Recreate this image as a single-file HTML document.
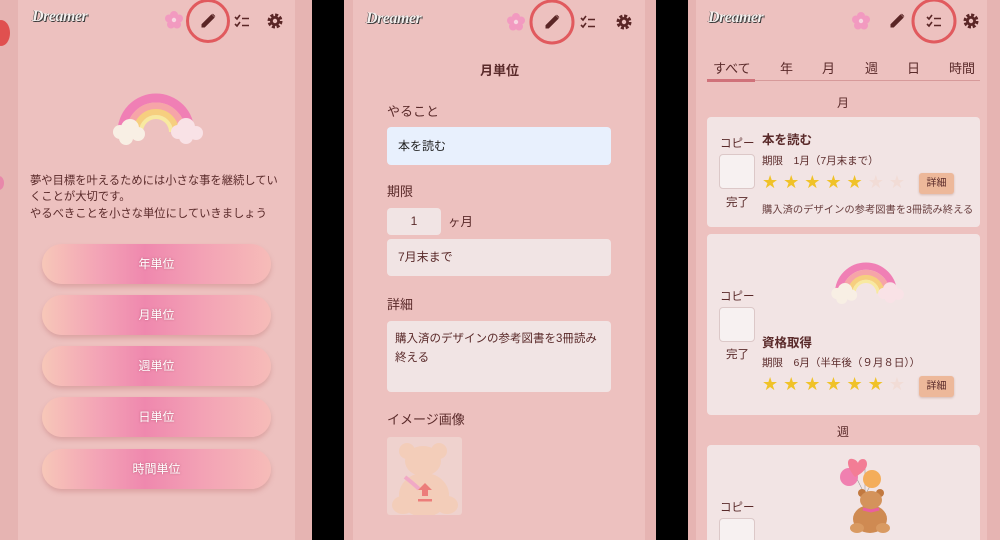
<!DOCTYPE html>
<html style="width:1000px;height:540px;overflow:hidden"><head><meta charset="utf-8">
<style>
*{margin:0;padding:0;box-sizing:border-box}
body{width:1000px;height:540px;overflow:hidden;background:#000;position:relative;font-family:"Liberation Sans","Noto Sans CJK JP",sans-serif;color:#5a2a2a}
.a{position:absolute}
.outer{background:#e6b4b2}
.inner{background:#edc1bf}
.logo{font-family:"Liberation Serif",serif;font-style:italic;font-weight:bold;font-size:16px;color:#f4f0ee;text-shadow:1px 1px 0 #3b3b3b,-0.5px 0 0 #3b3b3b;letter-spacing:-0.5px}
.t12{font-size:11.3px;line-height:16px;white-space:nowrap}
.btn{position:absolute;left:42px;width:229px;height:40px;border-radius:20px;background:linear-gradient(90deg,#f7c7b8 0%,#f3a3b6 25%,#ef88ae 45%,#f3a2b5 70%,#f6bcb8 100%);box-shadow:0 3px 5px rgba(190,110,110,.35);color:#fff;font-size:12px;text-align:center;line-height:40px;text-shadow:0 0 2px rgba(150,60,80,.6)}
.inp{position:absolute;background:#f1e4e4;border-radius:4px;font-size:12px;padding-left:11px}
.card{position:absolute;left:707px;width:273px;background:#f2e4e4;border-radius:4px}
.chk{position:absolute;width:36px;height:35px;border:1px solid #dcc8c8;border-radius:4px;background:#f7f1f1}
.det{position:absolute;width:35px;height:21px;background:#edb89a;border-radius:3px;font-size:10px;text-align:center;line-height:21px;box-shadow:0 1px 2px rgba(150,90,70,.3)}
.stars{position:absolute;font-family:"DejaVu Sans",sans-serif;font-size:18px;letter-spacing:5px;color:#f0c228;white-space:nowrap;line-height:20px}
.stars span{color:#f2dcd6}
</style></head><body>

<div class="a outer" style="left:0;top:0;width:312px;height:540px"></div>
<div class="a inner" style="left:18px;top:0;width:277px;height:540px"></div>
<div class="a" style="left:-8px;top:20px;width:18px;height:26px;border-radius:50%;background:#e0504f"></div>
<div class="a" style="left:-6px;top:176px;width:10px;height:14px;border-radius:50%;background:#e888aa"></div>

<div class="a outer" style="left:344px;top:0;width:312px;height:540px"></div>
<div class="a inner" style="left:353px;top:0;width:292px;height:540px"></div>

<div class="a outer" style="left:688px;top:0;width:312px;height:540px"></div>
<div class="a inner" style="left:696px;top:0;width:291px;height:540px"></div>

<svg width="0" height="0" style="position:absolute">
<defs>
<g id="flower"><g fill="#f29ac0"><circle cx="0" cy="-5" r="4"/><circle cx="5" cy="-1.5" r="4"/><circle cx="3" cy="4.5" r="4"/><circle cx="-3" cy="4.5" r="4"/><circle cx="-5" cy="-1.5" r="4"/></g><circle r="2.2" fill="#f7d6e0"/></g>
<g id="pencil"><path d="M-6 6 L-6 3.5 L3.5 -6 L6 -3.5 L-3.5 6 Z M4.5 -7 L7 -4.5" fill="#5a2626" stroke="#5a2626" stroke-width="1"/></g>
<g id="list" fill="none" stroke="#5a2626" stroke-width="1.6"><path d="M-7 -4 l2 2 l3 -4 M-7 3 l2 2 l3 -4"/><path d="M0 -2.5 h7 M0 4.5 h7"/></g>
<g id="gear"><circle r="6" fill="none" stroke="#5a2626" stroke-width="3" stroke-dasharray="3 1.7"/><circle r="5" fill="#5a2626"/><circle r="2.2" fill="#edc1bf"/></g>
</defs></svg>

<div class="a logo" style="left:32px;top:8px">Dreamer</div>
<svg class="a" style="left:150px;top:0" width="145" height="45">
<use href="#flower" x="24" y="20"/><use href="#pencil" x="58" y="21"/><use href="#list" x="92" y="21"/><use href="#gear" x="125" y="21"/>
<circle cx="58" cy="21" r="20.5" fill="none" stroke="#e15a5e" stroke-width="3"/></svg>

<div class="a logo" style="left:366px;top:10px">Dreamer</div>
<svg class="a" style="left:492px;top:0" width="145" height="45">
<use href="#flower" x="24" y="22"/><use href="#pencil" x="60" y="22"/><use href="#list" x="96" y="22"/><use href="#gear" x="132" y="22"/>
<circle cx="60" cy="22" r="21" fill="none" stroke="#e15a5e" stroke-width="3"/></svg>

<div class="a logo" style="left:708px;top:9px">Dreamer</div>
<svg class="a" style="left:820px;top:0" width="170" height="45">
<use href="#flower" x="41" y="21"/><use href="#pencil" x="77" y="21"/><use href="#list" x="114" y="21"/><use href="#gear" x="151" y="21"/>
<circle cx="114" cy="21" r="21" fill="none" stroke="#e15a5e" stroke-width="3"/></svg>

<svg class="a" style="left:108px;top:88px" width="96" height="62" viewBox="0 0 96 62">
<path d="M14 44 A34 34 0 0 1 82 44" fill="none" stroke="#f07fb5" stroke-width="9"/>
<path d="M22 44 A26 26 0 0 1 74 44" fill="none" stroke="#f6a5a8" stroke-width="7"/>
<path d="M28 44 A20 20 0 0 1 68 44" fill="none" stroke="#f6cf7f" stroke-width="6"/>
<path d="M33 44 A15 15 0 0 1 63 44" fill="none" stroke="#f8e9a0" stroke-width="4"/>
<g fill="#f8efe4"><circle cx="12" cy="44" r="7"/><circle cx="22" cy="40" r="9"/><circle cx="30" cy="46" r="7"/><circle cx="18" cy="50" r="7"/></g>
<g fill="#f9e2e6"><circle cx="70" cy="44" r="7"/><circle cx="78" cy="39" r="9"/><circle cx="88" cy="45" r="7"/><circle cx="78" cy="49" r="7"/></g>
</svg>

<div class="a t12" style="left:30px;top:173px">夢や目標を叶えるためには小さな事を継続してい</div>
<div class="a t12" style="left:30px;top:189px">くことが大切です。</div>
<div class="a t12" style="left:30px;top:206px">やるべきことを小さな単位にしていきましょう</div>

<div class="btn" style="top:244px">年単位</div>
<div class="btn" style="top:295px">月単位</div>
<div class="btn" style="top:346px">週単位</div>
<div class="btn" style="top:397px">日単位</div>
<div class="btn" style="top:449px">時間単位</div>

<div class="a" style="left:480px;top:60px;font-size:13px;font-weight:bold;color:#5a2a2a">月単位</div>
<div class="a t12" style="left:387px;top:104px;font-size:13px">やること</div>
<div class="inp" style="left:387px;top:127px;width:224px;height:38px;line-height:38px;background:#e8f0fd;color:#222">本を読む</div>
<div class="a t12" style="left:387px;top:184px;font-size:13px">期限</div>
<div class="inp" style="left:387px;top:208px;width:54px;height:27px;line-height:27px;padding:0;text-align:center">1</div>
<div class="a t12" style="left:448px;top:214px;font-size:12.5px">ヶ月</div>
<div class="inp" style="left:387px;top:239px;width:224px;height:37px;line-height:37px">7月末まで</div>
<div class="a t12" style="left:387px;top:297px;font-size:13px">詳細</div>
<div class="inp" style="left:387px;top:321px;width:224px;height:71px;padding:9px 6px 0 8px;line-height:19px;font-size:11.5px;white-space:nowrap">購入済のデザインの参考図書を3冊読み<br>終える</div>
<div class="a t12" style="left:387px;top:412px;font-size:13px">イメージ画像</div>
<div class="a" style="left:387px;top:437px;width:75px;height:78px;background:#efd2ce;border-radius:3px;overflow:hidden">
<svg width="75" height="78"><g fill="#f3cdb9"><circle cx="20" cy="14" r="8"/><circle cx="52" cy="14" r="8"/><ellipse cx="36" cy="24" rx="18" ry="15"/><ellipse cx="37" cy="58" rx="25" ry="22"/><ellipse cx="16" cy="68" rx="11" ry="9"/><ellipse cx="60" cy="68" rx="11" ry="9"/></g>
<path d="M18 40 q10 8 14 12" stroke="#f1a9c6" stroke-width="4" fill="none"/>
<path d="M38 46 l-7 7 h4 v6 h6 v-6 h4 z" fill="#ec7d7a"/><rect x="31" y="62" width="14" height="2.5" fill="#ec7d7a"/></svg></div>

<div class="a" style="left:713px;top:58px;font-size:13px">すべて</div>
<div class="a" style="left:780px;top:58px;font-size:13px">年</div>
<div class="a" style="left:822px;top:58px;font-size:13px">月</div>
<div class="a" style="left:865px;top:58px;font-size:13px">週</div>
<div class="a" style="left:907px;top:58px;font-size:13px">日</div>
<div class="a" style="left:949px;top:58px;font-size:13px">時間</div>
<div class="a" style="left:707px;top:80px;width:273px;height:1px;background:#d79a9a"></div>
<div class="a" style="left:707px;top:79px;width:48px;height:3px;background:#d0727a"></div>
<div class="a" style="left:837px;top:94px;font-size:12px">月</div>

<div class="card" style="top:117px;height:110px"></div>
<div class="a" style="left:720px;top:135px;font-size:11.5px">コピー</div>
<div class="chk" style="left:719px;top:154px"></div>
<div class="a" style="left:726px;top:194px;font-size:11.5px">完了</div>
<div class="a" style="left:762px;top:129px;font-size:12.5px;font-weight:bold">本を読む</div>
<div class="a" style="left:762px;top:153px;font-size:10.5px">期限　1月（7月末まで）</div>
<div class="stars" style="left:762px;top:173px">★★★★★<span>★★</span></div>
<div class="det" style="left:919px;top:173px">詳細</div>
<div class="a" style="left:762px;top:201px;font-size:10.3px;color:#6a4040">購入済のデザインの参考図書を3冊読み終える</div>

<div class="card" style="top:234px;height:181px"></div>
<svg class="a" style="left:826px;top:258px" width="80" height="50" viewBox="0 0 96 62">
<path d="M14 44 A34 34 0 0 1 82 44" fill="none" stroke="#f07fb5" stroke-width="9"/>
<path d="M22 44 A26 26 0 0 1 74 44" fill="none" stroke="#f6a5a8" stroke-width="7"/>
<path d="M28 44 A20 20 0 0 1 68 44" fill="none" stroke="#f6cf7f" stroke-width="6"/>
<path d="M33 44 A15 15 0 0 1 63 44" fill="none" stroke="#f8e9a0" stroke-width="4"/>
<g fill="#f8efe4"><circle cx="12" cy="44" r="7"/><circle cx="22" cy="40" r="9"/><circle cx="30" cy="46" r="7"/><circle cx="18" cy="50" r="7"/></g>
<g fill="#f9e2e6"><circle cx="70" cy="44" r="7"/><circle cx="78" cy="39" r="9"/><circle cx="88" cy="45" r="7"/><circle cx="78" cy="49" r="7"/></g>
</svg>
<div class="a" style="left:720px;top:288px;font-size:11.5px">コピー</div>
<div class="chk" style="left:719px;top:307px"></div>
<div class="a" style="left:726px;top:346px;font-size:11.5px">完了</div>
<div class="a" style="left:762px;top:332px;font-size:12.5px;font-weight:bold">資格取得</div>
<div class="a" style="left:762px;top:355px;font-size:10.5px">期限　6月（半年後（９月８日））</div>
<div class="stars" style="left:762px;top:375px">★★★★★★<span>★</span></div>
<div class="det" style="left:919px;top:376px">詳細</div>

<div class="a" style="left:837px;top:423px;font-size:12px">週</div>
<div class="card" style="top:445px;height:95px;border-radius:4px 4px 0 0"></div>
<svg class="a" style="left:835px;top:455px" width="65" height="80">
<path d="M30 40 L20 20 M30 40 L30 10 M30 40 L38 26" stroke="#999" stroke-width=".6"/>
<ellipse cx="14" cy="22" rx="9" ry="9" fill="#f080b0"/>
<path d="M20 22 C10 10 12 2 18 4 C22 5 23 8 23 8 C24 3 32 2 32 9 C32 15 24 20 20 22Z" fill="#f37d95"/>
<circle cx="37" cy="24" r="9" fill="#f4ad5a"/>
<ellipse cx="35" cy="64" rx="17" ry="14" fill="#cf8a52"/>
<circle cx="27" cy="38" r="4" fill="#c27940"/><circle cx="45" cy="38" r="4" fill="#c27940"/>
<ellipse cx="36" cy="45" rx="11" ry="9" fill="#d4935b"/>
<ellipse cx="22" cy="73" rx="7" ry="5" fill="#d99a62"/><ellipse cx="48" cy="73" rx="7" ry="5" fill="#d99a62"/>
<path d="M28 54 l8 2 l8 -2" stroke="#ea5fa0" stroke-width="3" fill="none"/></svg>
<div class="a" style="left:720px;top:499px;font-size:11.5px">コピー</div>
<div class="chk" style="left:719px;top:518px;height:22px;border-bottom:none;border-radius:4px 4px 0 0"></div>

</body></html>
